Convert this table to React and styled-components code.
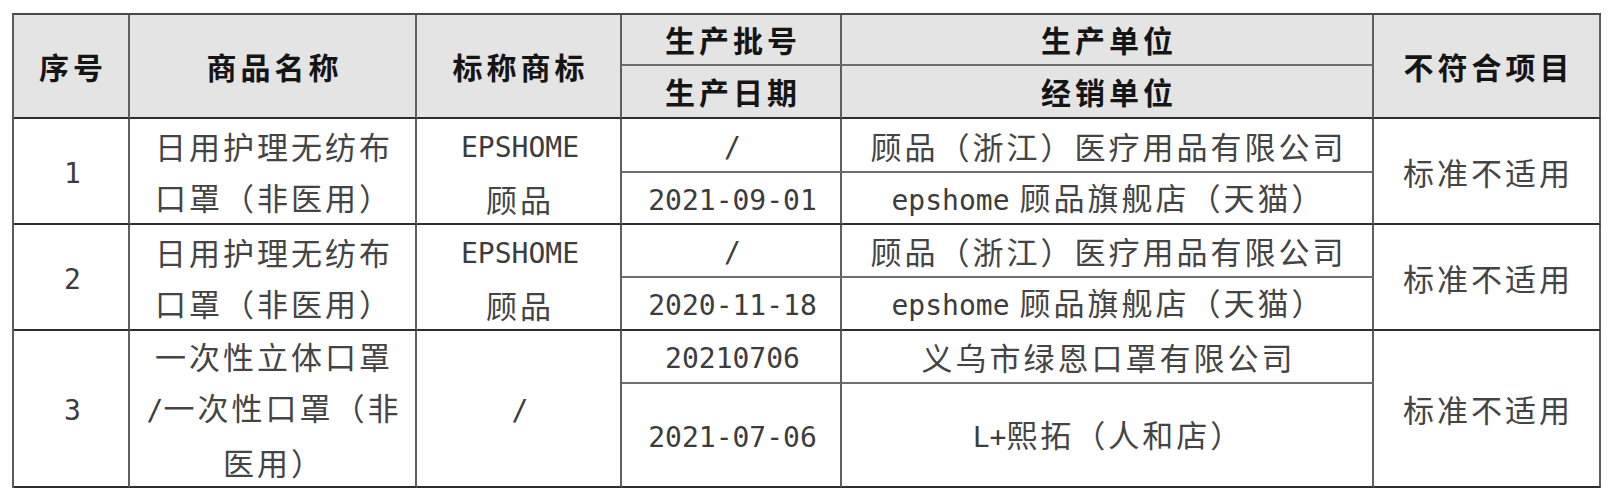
import React from 'react';
import styled, { createGlobalStyle } from 'styled-components';

const GlobalStyle = createGlobalStyle`
  html, body {
    margin: 0;
    padding: 0;
    background: #ffffff;
  }
`;

const rows = [
  {
    no: '1',
    name: ['日用护理无纺布', '口罩（非医用）'],
    brand: ['EPSHOME', '顾品'],
    batch: '/',
    date: '2021-09-01',
    maker: '顾品（浙江）医疗用品有限公司',
    dealer: ['epshome', ' 顾品旗舰店（天猫）'],
  },
  {
    no: '2',
    name: ['日用护理无纺布', '口罩（非医用）'],
    brand: ['EPSHOME', '顾品'],
    batch: '/',
    date: '2020-11-18',
    maker: '顾品（浙江）医疗用品有限公司',
    dealer: ['epshome', ' 顾品旗舰店（天猫）'],
  },
  {
    no: '3',
    name: ['一次性立体口罩', '/一次性口罩（非', '医用）'],
    brand: null,
    batch: '20210706',
    date: '2021-07-06',
    maker: '义乌市绿恩口罩有限公司',
    dealer: ['L+', '熙拓（人和店）'],
  },
];

// latin runs get a narrow mono face, like the half-width glyphs of the original
const Mixed = ({ text }) => {
  const parts = text.split(/([A-Za-z0-9+\-/]+)/).filter(Boolean);
  return parts.map((p, i) =>
    /^[A-Za-z0-9+\-/]+$/.test(p) ? <Latin key={i}>{p}</Latin> : <span key={i}>{p}</span>
  );
};

const Lines = ({ lines }) =>
  lines.map((line, i) => (
    <React.Fragment key={i}>
      {i > 0 && <br />}
      <Mixed text={line} />
    </React.Fragment>
  ));

const Td = ({ children, ...rest }) => (
  <Cell {...rest}>
    <CellText>{children}</CellText>
  </Cell>
);

const App = () => {
  return (
    <>
      <GlobalStyle />
      <Sheet>
        <Td $head $span={2}>序号</Td>
        <Td $head $span={2}>商品名称</Td>
        <Td $head $span={2}>标称商标</Td>
        <Td $head $minor>生产批号</Td>
        <Td $head $minor>生产单位</Td>
        <Td $head $span={2}>不符合项目</Td>
        <Td $head>生产日期</Td>
        <Td $head>经销单位</Td>

        {rows.map((r) => (
          <React.Fragment key={r.no}>
            <Td $span={2}><Latin>{r.no}</Latin></Td>
            <Td $span={2}><Lines lines={r.name} /></Td>
            <Td $span={2}>
              {r.brand ? <Lines lines={r.brand} /> : <Latin>/</Latin>}
            </Td>
            <Td $minor><Latin>{r.batch}</Latin></Td>
            <Td $minor><Mixed text={r.maker} /></Td>
            <Td $span={2}>标准不适用</Td>
            <Td><Latin>{r.date}</Latin></Td>
            <Td>
              <Latin>{r.dealer[0]}</Latin>
              {r.dealer[1]}
            </Td>
          </React.Fragment>
        ))}
      </Sheet>
    </>
  );
};

export default App;

const Sheet = styled.div`
  display: grid;
  grid-template-columns: 116px 287px 205px 220px 532px 227px;
  grid-template-rows: 51px 53px 54px 52px 53px 53px 53px 104px;
  width: max-content;
  margin: 13px 0 0 12px;
  border-top: 2px solid #4a4a4a;
  border-left: 2px solid #5a5a5a;
  font-family: 'Noto Sans CJK SC', 'Noto Sans', sans-serif;
`;

const Cell = styled.div`
  grid-row: span ${(p) => p.$span || 1};
  display: flex;
  align-items: center;
  justify-content: center;
  box-sizing: border-box;
  padding: 0 0 0 ${(p) => (p.$head ? '4px' : '3px')};
  border-right: 2px solid #5f5f5f;
  border-bottom: 2px solid ${(p) => (p.$minor ? '#6e6e6e' : '#2e2e2e')};
  background: ${(p) => (p.$head ? '#e4e4e4' : '#ffffff')};
  color: ${(p) => (p.$head ? '#151515' : '#444444')};
  font-size: ${(p) => (p.$head ? '30px' : '31px')};
  font-weight: ${(p) => (p.$head ? 700 : 400)};
  letter-spacing: ${(p) => (p.$head ? '4px' : '3px')};
  line-height: 51px;
`;

const CellText = styled.div`
  text-align: center;
  white-space: nowrap;
`;

const Latin = styled.span`
  font-family: 'DejaVu Sans Mono', 'Liberation Mono', monospace;
  font-size: 28px;
  letter-spacing: 0;
  color: #3c3c3c;
`;
